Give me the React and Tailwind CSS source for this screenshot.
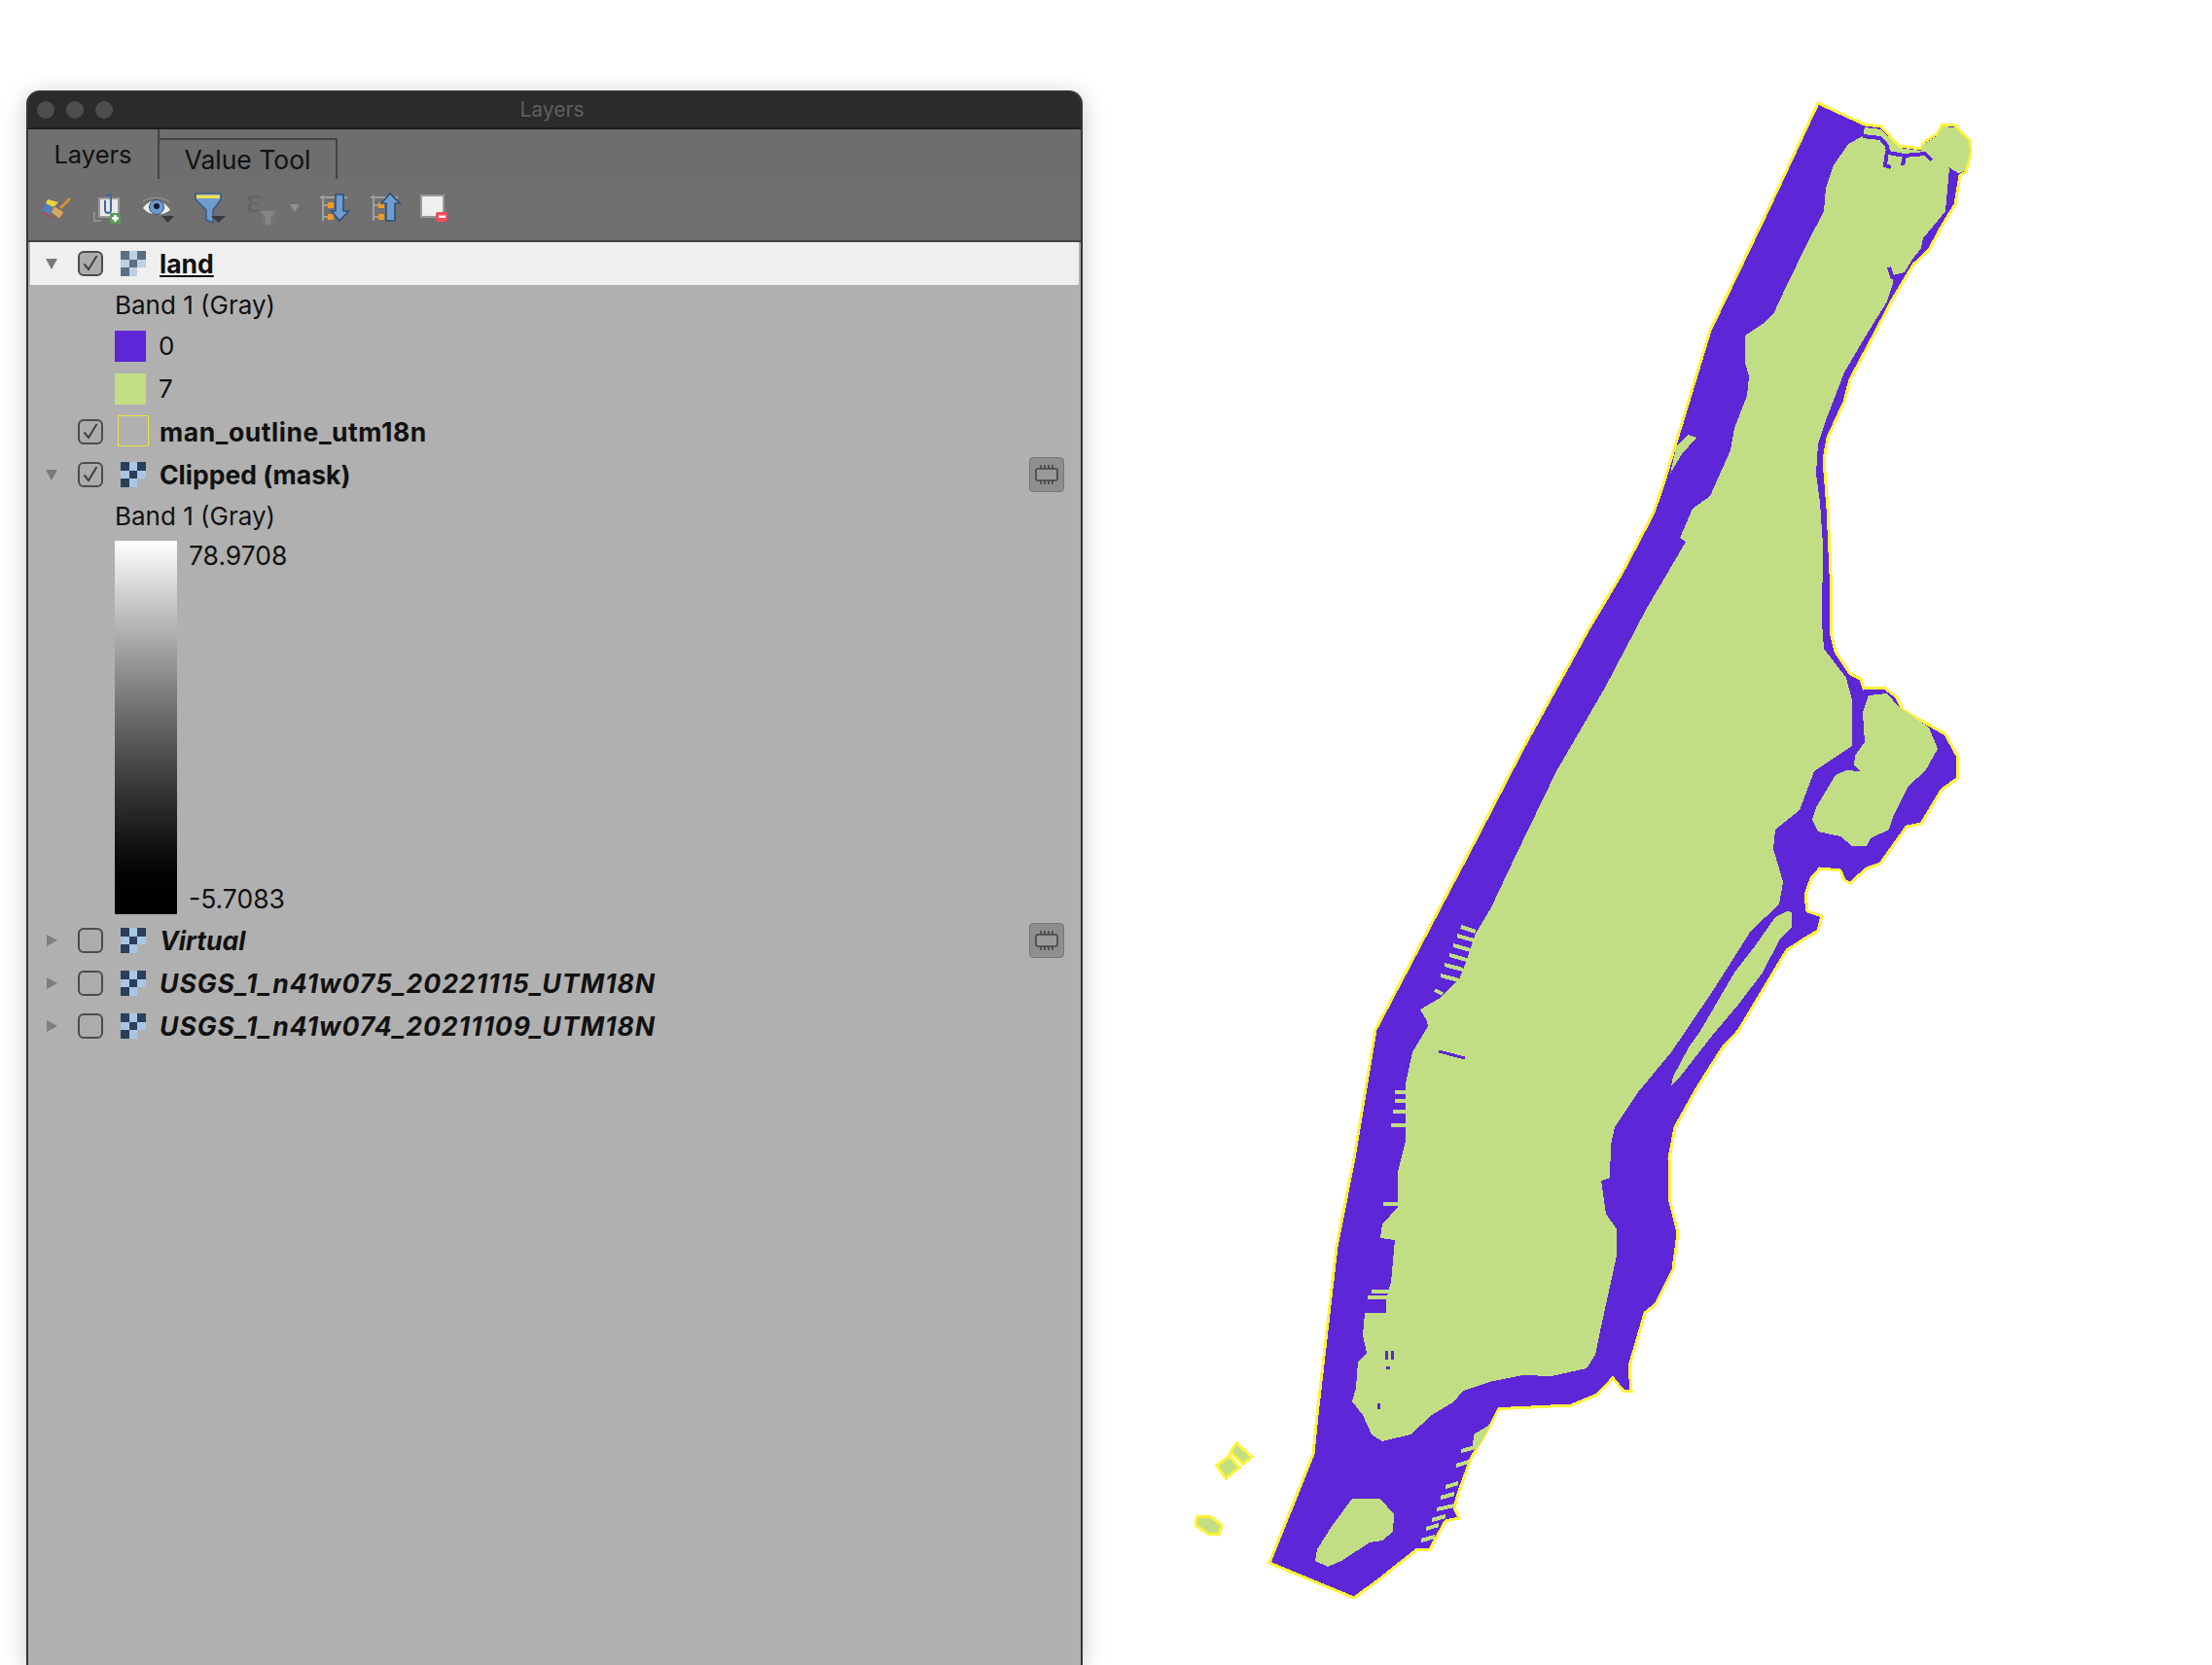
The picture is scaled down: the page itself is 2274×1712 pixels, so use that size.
import React from 'react';

const outline = '1869,106 1917,128 1934,130 1952,150 1975,153 1977,147 1992,137 1997,128 2010,129 2025,145 2026,157 2021,177 2015,180 2010,210 1996,233 1983,257 1967,272 1946,307 1925,347 1902,390 1896,413 1879,450 1875,473 1879,523 1882,590 1882,650 1887,670 1902,693 1913,698 1916,708 1937,707 1950,717 1956,730 2000,755 2012,777 2013,800 1996,812 1975,847 1960,850 1933,888 1919,893 1902,908 1896,905 1892,895 1871,893 1862,903 1856,920 1858,937 1873,942 1869,957 1852,967 1837,977 1817,1010 1787,1060 1771,1077 1745,1118 1722,1159 1716,1191 1717,1236 1725,1268 1720,1305 1702,1341 1691,1350 1675,1405 1677,1430 1669,1430 1658,1417 1642,1434 1615,1445 1553,1448 1541,1448 1533,1464 1512,1500 1499,1536 1495,1550 1500,1561 1486,1564 1470,1593 1457,1593 1414,1627 1392,1643 1305,1607 1350,1495 1354,1455 1363,1377 1374,1282 1392,1191 1414,1059 1512,873 1567,767 1633,647 1667,590 1700,527 1710,498 1758,340 1817,217';

const land = '1917,131 1934,133 1952,152 1975,155 1977,149 1992,139 1997,130 2009,131 2024,146 2025,157 2020,176 2013,178 2000,170 2004,173 2000,217 1992,227 1977,245 1975,255 1965,268 1958,280 1946,283 1946,292 1940,310 1917,347 1896,383 1879,427 1869,457 1867,487 1871,517 1874,560 1873,640 1875,667 1898,697 1904,720 1904,767 1865,793 1850,833 1825,853 1823,873 1829,893 1833,907 1829,930 1800,957 1762,1017 1733,1060 1718,1082 1684,1123 1660,1159 1656,1177 1655,1211 1646,1214 1651,1248 1662,1264 1662,1291 1655,1323 1646,1364 1640,1393 1631,1407 1595,1415 1566,1414 1535,1420 1504,1430 1495,1441 1472,1455 1450,1475 1421,1482 1410,1475 1401,1455 1390,1441 1394,1427 1396,1400 1405,1391 1401,1373 1403,1350 1425,1350 1425,1336 1430,1318 1434,1275 1419,1273 1421,1259 1437,1241 1437,1205 1445,1173 1445,1114 1452,1082 1468,1055 1467,1050 1460,1038 1479,1027 1500,1007 1508,987 1517,960 1533,933 1558,880 1600,793 1650,707 1692,627 1733,557 1727,553 1740,523 1758,510 1779,463 1783,440 1796,407 1798,387 1794,373 1794,345 1812,333 1823,323 1837,293 1858,250 1875,217 1877,193 1885,170 1900,148 1915,140';

const randalls = '1921,715 1940,713 1952,727 1983,748 1992,770 1979,793 1962,808 1946,840 1942,853 1923,862 1919,870 1904,870 1892,860 1869,855 1863,843 1867,830 1887,797 1898,792 1912,793 1906,787 1907,777 1917,763 1915,733';
const roosevelt = '1837,937 1842,938 1842,953 1829,967 1812,1000 1787,1033 1760,1065 1725,1110 1718,1116 1720,1107 1736,1077 1748,1060 1783,1000 1804,973 1825,943';
const governors = '1390,1541 1419,1541 1433,1557 1432,1575 1421,1584 1408,1586 1379,1605 1365,1611 1352,1605 1354,1593 1370,1568';
const ellisA = '1271,1484 1287,1498 1278,1505 1265,1493';
const ellisB = '1264,1497 1274,1509 1260,1520 1251,1507';
const liberty = '1231,1559 1245,1560 1256,1568 1253,1578 1242,1577 1229,1568';
const sliver = '1735,447 1744,450 1729,467 1717,487 1723,460';
const southPier = '1515,1475 1533,1464 1519,1489 1514,1488';

// green piers that poke into the river, [x1, y1, x2, y2]
const piers = [
  [1502, 1492, 1517, 1488], [1497, 1507, 1510, 1503], [1486, 1529, 1499, 1525], [1481, 1540, 1495, 1536],
  [1477, 1552, 1495, 1548], [1472, 1563, 1486, 1559], [1466, 1572, 1479, 1568], [1461, 1584, 1475, 1580],
  [1434, 1123, 1447, 1123], [1434, 1132, 1447, 1132], [1432, 1143, 1447, 1143], [1430, 1157, 1447, 1157],
  [1422, 1238, 1438, 1238], [1410, 1328, 1431, 1328], [1406, 1334, 1426, 1334],
  [1502, 953, 1517, 958], [1498, 962, 1515, 967], [1494, 972, 1512, 977], [1490, 982, 1508, 987],
  [1485, 992, 1504, 997], [1481, 1003, 1500, 1008], [1475, 1018, 1483, 1022],
];
// purple specks on the land
const specks = [
  [1479, 1081, 1506, 1088], [1425, 1389, 1426, 1398], [1431, 1389, 1431, 1398], [1425, 1406, 1429, 1406], [1417, 1443, 1417, 1449],
];
// thin channels in the north end
const channels = [
  '1915,140 1933,142 1940,150 1941,157 1958,160 1979,158 1986,165',
  '1940,155 1938,170 1944,172',
  '1958,161 1956,170',
  '1946,287 1942,275',
];

const ManhattanMap = () => (
  <svg width="1161" height="1712" viewBox="1113 0 1161 1712" shapeRendering="crispEdges" className="block shrink-0">
    <polygon points={outline} fill="#5d26d6" stroke="#fff23a" strokeWidth="3" />
    <polygon points={land} fill="#c2de84" />
    <polygon points={randalls} fill="#c2de84" />
    <polygon points={roosevelt} fill="#c2de84" />
    <polygon points={governors} fill="#c2de84" />
    <polygon points={sliver} fill="#c2de84" />
    <polygon points={southPier} fill="#c2de84" />
    {piers.map(([x1, y1, x2, y2], i) => (
      <line key={i} x1={x1} y1={y1} x2={x2} y2={y2} stroke="#c2de84" strokeWidth="4" />
    ))}
    {specks.map(([x1, y1, x2, y2], i) => (
      <line key={i} x1={x1} y1={y1} x2={x2} y2={y2} stroke="#5d26d6" strokeWidth="3" />
    ))}
    {channels.map((c, i) => (
      <polyline key={i} points={c} fill="none" stroke="#5d26d6" strokeWidth="4" />
    ))}
    {[ellisA, ellisB, liberty].map((p, i) => (
      <polygon key={i} points={p} fill="#c2de84" stroke="#fff23a" strokeWidth="3" />
    ))}
  </svg>
);

const Triangle = ({ open }) => (
  <svg width="14" height="14" viewBox="0 0 14 14" className="block">
    {open ? <path d="M1 2h12l-6 11z" fill="#7a7a7a" /> : <path d="M2 1l11 6-11 6z" fill="#7e7e7e" />}
  </svg>
);

const Checkbox = ({ checked }) => (
  <div className="flex h-[26px] w-[26px] items-center justify-center rounded-[6px] border-2 border-[#4c4c4c] bg-[#acacac]">
    {checked && (
      <svg width="20" height="20" viewBox="0 0 20 20">
        <path d="M3.5 10.5l4.500 5.500 8.500-14" fill="none" stroke="#404040" strokeWidth="2" />
      </svg>
    )}
  </div>
);

const RasterIcon = ({ dark = '#2c3e58', light = '#a9c6e6' }) => (
  <svg width="26" height="26" viewBox="0 0 3 3" shapeRendering="crispEdges" className="block">
    <rect x="0" y="0" width="1" height="1" fill={dark} />
    <rect x="1" y="0" width="1" height="1" fill={light} />
    <rect x="2" y="0" width="1" height="1" fill={dark} />
    <rect x="0" y="1" width="1" height="1" fill={light} />
    <rect x="1" y="1" width="1" height="1" fill={dark} />
    <rect x="2" y="1" width="1" height="1" fill={light} />
    <rect x="0" y="2" width="1" height="1" fill={dark} />
    <rect x="1" y="2" width="1" height="1" fill={light} />
  </svg>
);

const ChipBadge = () => (
  <div className="absolute right-[15px] top-[4px] flex h-[36px] w-[36px] items-center justify-center rounded-[4px] border border-[#777] bg-[#8e8e8e]">
    <svg width="28" height="24" viewBox="0 0 28 24">
      <rect x="3" y="6" width="22" height="12" rx="2" fill="#9a9a9a" stroke="#444" strokeWidth="1.6" />
      <path d="M8 2v4M12 2v4M16 2v4M20 2v4M8 18v4M12 18v4M16 18v4M20 18v4" stroke="#444" strokeWidth="1.6" />
    </svg>
  </div>
);

const LayerRow = ({ name, open, checked, icon, selected, italic, underline, chip, tracking = '' }) => (
  <div className={`relative flex h-[44px] items-center ${selected ? 'bg-[#efefef]' : ''}`}>
    <div className="flex w-[49px] justify-end pr-[20px]">{open !== undefined && <Triangle open={open} />}</div>
    <Checkbox checked={checked} />
    <div className="ml-[18px] flex w-[40px] items-center">{icon}</div>
    <span className={`text-[26.5px] font-bold leading-none text-[#111] ${tracking} ${italic ? 'italic' : ''} ${underline ? 'underline' : ''}`}>{name}</span>
    {chip && <ChipBadge />}
  </div>
);

const Label = ({ children }) => (
  <div className="flex h-[41px] items-center pl-[87px] text-[26px] leading-none text-[#111]">{children}</div>
);

const LegendRow = ({ className, children }) => (
  <div className="flex h-[44px] items-center pl-[87px]">
    <div className={`h-[32px] w-[32px] ${className}`} />
    <span className="ml-[13px] text-[26px] leading-none text-[#111]">{children}</span>
  </div>
);

const BrushIcon = () => (
  <svg width="36" height="36" viewBox="0 0 36 36">
    <path d="M4 21l8 4 5 4-12-5z" fill="#c93b3b" />
    <path d="M7 13l8 4-3 9-8-5z" fill="#4f7fc0" />
    <path d="M9 9l11 3-5 5-8-4z" fill="#eed23c" />
    <path d="M16 16l10 6-5 7-9-7z" fill="#d8a868" stroke="#8a6a3a" strokeWidth="1" />
    <path d="M22 18L32 8" stroke="#d8932e" strokeWidth="2.6" />
  </svg>
);

const AddGroupIcon = () => (
  <svg width="36" height="36" viewBox="0 0 36 36">
    <path d="M5 22v9h7" fill="none" stroke="#8f8f8f" strokeWidth="2" />
    <rect x="10" y="8" width="20" height="19" fill="#e8e8e8" stroke="#9a9a9a" strokeWidth="2" />
    <path d="M16 10v10a3 3 0 006 0V5a3 3 0 00-5 0" fill="none" stroke="#3d6a9e" strokeWidth="2" />
    <rect x="21" y="23" width="11" height="11" rx="1.5" fill="#5a9a5e" />
    <path d="M26.500 25v7M23 28.500h7" stroke="#fff" strokeWidth="2.4" />
  </svg>
);

const EyeIcon = () => (
  <svg width="36" height="36" viewBox="0 0 36 36">
    <path d="M3 18c8-11 20-10 28 2-8 6-20 7-28-2z" fill="#eeeeec" />
    <path d="M3 11c8-5 20-5 28 1" fill="none" stroke="#9a9a9a" strokeWidth="1" />
    <circle cx="17" cy="17" r="7.5" fill="#6f99cf" stroke="#2f4f7a" strokeWidth="1" />
    <circle cx="17" cy="16" r="3" fill="#10182a" />
    <path d="M22 26h13l-6.500 7z" fill="#3a3a3a" />
  </svg>
);

const FilterIcon = () => (
  <svg width="36" height="36" viewBox="0 0 36 36">
    <path d="M5 3h26v6L23 20v13l-7-3V20L5 9z" fill="#6e9ccf" stroke="#2f4f7a" strokeWidth="1.2" />
    <rect x="6" y="4.500" width="24" height="3.500" fill="#f0dd50" />
    <path d="M21 26h15l-7.500 7z" fill="#3a3a3a" />
  </svg>
);

const ExpressionIcon = () => (
  <svg width="40" height="36" viewBox="0 0 40 36" className="overflow-visible">
    <text x="7" y="22" fontSize="36" fill="#616161" fontFamily="'Liberation Serif', serif">ε</text>
    <rect x="23" y="22" width="14" height="12" fill="#757575" />
    <path d="M22 21h15l-5 7v7h-5v-7z" fill="#858585" />
  </svg>
);

const ExpandIcon = () => (
  <svg width="36" height="36" viewBox="0 0 36 36">
    <path d="M6 5v26M3 7h28M6 15h5M6 27h5" fill="none" stroke="#a0a0a0" strokeWidth="2" />
    <rect x="11" y="12" width="6" height="6" fill="#f29a1f" />
    <rect x="11" y="24" width="6" height="6" fill="#f29a1f" />
    <path d="M19 4h8v17h5.500L23 31 14.500 21H19z" fill="#6e9ccf" stroke="#2f4f7a" strokeWidth="1.6" />
  </svg>
);

const CollapseIcon = () => (
  <svg width="36" height="36" viewBox="0 0 36 36">
    <path d="M6 5v26M3 7h28M6 15h5M6 27h5" fill="none" stroke="#a0a0a0" strokeWidth="2" />
    <rect x="11" y="12" width="6" height="6" fill="#f29a1f" />
    <rect x="11" y="24" width="6" height="6" fill="#f29a1f" />
    <path d="M19 31h9V13h5L23 3 14 13h5z" fill="#6e9ccf" stroke="#2f4f7a" strokeWidth="1.6" />
  </svg>
);

const RemoveIcon = () => (
  <svg width="36" height="36" viewBox="0 0 36 36">
    <rect x="6" y="5" width="23" height="22" fill="#efefef" stroke="#9a9a9a" strokeWidth="2" />
    <rect x="21" y="22" width="12" height="10" rx="2" fill="#ef4f5a" />
    <rect x="24" y="25.500" width="7" height="2.500" fill="#fff" />
  </svg>
);

const ToolButton = ({ children, className = 'w-[52px]' }) => (
  <div className={`flex h-[36px] items-center justify-center ${className}`}>{children}</div>
);

const LayersPanel = () => (
  <div className="ml-[27px] mt-[93px] h-[1619px] w-[1086px] shrink-0 overflow-hidden rounded-t-[14px] border-x-2 border-t border-[#333] bg-[#707070] shadow-[0_4px_24px_rgba(0,0,0,0.22)]">
    <div className="relative flex h-[39px] items-center gap-[12px] border-b-2 border-[#1c1c1c] bg-[#2b2b2b] pl-[9px]">
      <div className="h-[18px] w-[18px] rounded-full bg-[#4e4e4e]" />
      <div className="h-[18px] w-[18px] rounded-full bg-[#4e4e4e]" />
      <div className="h-[18px] w-[18px] rounded-full bg-[#4e4e4e]" />
      <span className="flex-1 pr-[104px] text-center text-[21px] leading-none text-[#5f5f5f]">Layers</span>
    </div>
    <div className="flex h-[51px] items-end bg-[#6e6e6e]">
      <div className="flex h-full w-[135px] items-center justify-center border-r-2 border-[#444] bg-[#707070] text-[25.5px] leading-none text-[#111]">Layers</div>
      <div className="flex h-[42px] w-[183px] items-center justify-center border-r-2 border-t-2 border-[#444] bg-[#6e6e6e] text-[26.5px] leading-none text-[#111]">Value Tool</div>
    </div>
    <div className="flex h-[63px] items-center pb-[3px] pl-[3px]">
      <ToolButton><BrushIcon /></ToolButton>
      <ToolButton><AddGroupIcon /></ToolButton>
      <ToolButton><EyeIcon /></ToolButton>
      <ToolButton><FilterIcon /></ToolButton>
      <ToolButton><ExpressionIcon /></ToolButton>
      <div className="flex h-[36px] w-[26px] items-center justify-start pl-[5px]">
        <svg width="12" height="10" viewBox="0 0 12 10"><path d="M1 1h10L6 9z" fill="#909090" /></svg>
      </div>
      <ToolButton><ExpandIcon /></ToolButton>
      <ToolButton><CollapseIcon /></ToolButton>
      <ToolButton className="ml-[-3px] w-[52px]"><RemoveIcon /></ToolButton>
    </div>
    <div className="h-full border-t-2 border-[#444] bg-[#b0b0b0] pl-[2px] pr-[2px]">
      <LayerRow name="land" open checked selected underline icon={<RasterIcon dark="#5f6d80" light="#bcd0e6" />} />
      <Label>Band 1 (Gray)</Label>
      <LegendRow className="bg-[#5d26d6]">0</LegendRow>
      <LegendRow className="bg-[#c2de84]">7</LegendRow>
      <LayerRow name="man_outline_utm18n" checked tracking="tracking-[0.55px]" icon={<div className="ml-[-3px] mt-[-2px] h-[32px] w-[32px] border border-[#efe23a]" />} />
      <LayerRow name="Clipped (mask)" open checked chip icon={<RasterIcon />} />
      <Label>Band 1 (Gray)</Label>
      <div className="mt-[5px] flex h-[384px] pl-[87px]">
        <div className="h-full w-[64px] bg-gradient-to-b from-white to-black" />
        <div className="ml-[12px] flex h-full flex-col justify-between pb-[3px] pt-[2px] text-[26.5px] leading-none text-[#111]">
          <span>78.9708</span>
          <span>-5.7083</span>
        </div>
      </div>
      <div className="h-[5px]" />
      <LayerRow name="Virtual" open={false} italic chip icon={<RasterIcon />} />
      <LayerRow name="USGS_1_n41w075_20221115_UTM18N" open={false} italic tracking="tracking-[1px]" icon={<RasterIcon />} />
      <LayerRow name="USGS_1_n41w074_20211109_UTM18N" open={false} italic tracking="tracking-[1px]" icon={<RasterIcon />} />
    </div>
  </div>
);

export default function App() {
  return (
    <div className="flex h-[1712px] w-[2274px] overflow-hidden bg-white font-['Inter',sans-serif]">
      <LayersPanel />
      <ManhattanMap />
    </div>
  );
}
